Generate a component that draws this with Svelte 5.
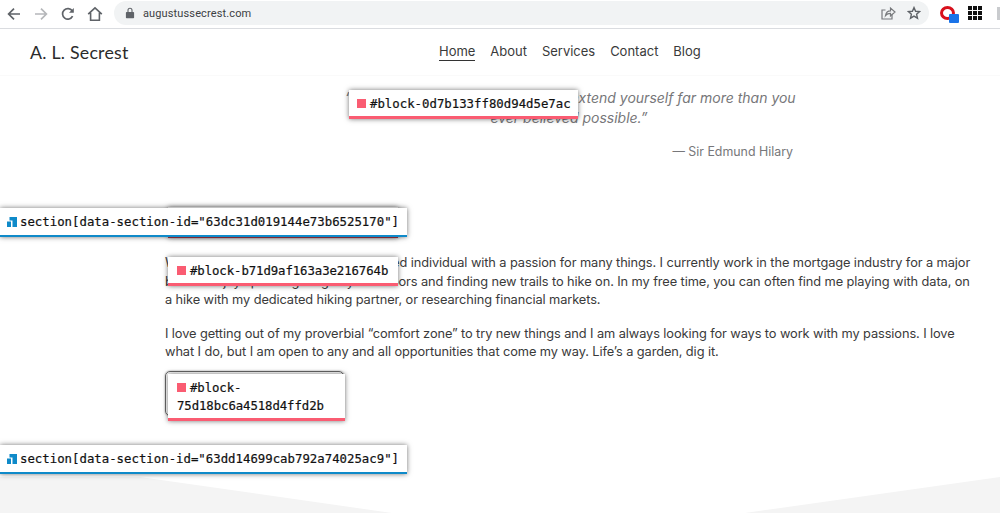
<script lang="ts">
	const navLinks = ['Home', 'About', 'Services', 'Contact', 'Blog'];
</script>

<div class="page">
	<div class="toolbar">
		<svg class="tool" width="16" height="16" viewBox="0 0 16 16"><path d="M14 8H3M8 2.600 2.600 8 8 13.400" fill="none" stroke="#5f6368" stroke-width="1.700" /></svg>
		<svg class="tool forward" width="16" height="16" viewBox="0 0 16 16"><path d="M2 8h11M8 2.600 13.400 8 8 13.400" fill="none" stroke="#b5b7ba" stroke-width="1.700" /></svg>
		<svg class="tool reload" width="16" height="16" viewBox="0 0 16 16"><path d="M12.600 10.200A5.300 5.300 0 1 1 12.200 4.800" fill="none" stroke="#5f6368" stroke-width="1.700" /><path d="M13.800 2v4.800H9z" fill="#5f6368" /></svg>
		<svg class="tool home" width="18" height="18" viewBox="0 0 18 18"><path d="M2.200 9.200 9 2.800l6.800 6.400M4.600 7.800v7.400h8.800V7.800" fill="none" stroke="#5f6368" stroke-width="1.600" /></svg>
		<div class="omnibox">
			<svg class="lock" width="10" height="12" viewBox="0 0 10 12"><path d="M1.600 5h6.800c.4 0 .7.3.7.7v4.800c0 .4-.3.7-.7.7H1.600c-.4 0-.7-.3-.7-.7V5.700c0-.4.3-.7.7-.7z" fill="#5f6368" /><path d="M3 5V3.200a2 2 0 0 1 4 0V5" fill="none" stroke="#5f6368" stroke-width="1.100" /></svg>
			<span class="url">augustussecrest.com</span>
			<svg class="share" width="16" height="16" viewBox="0 0 16 16"><path d="M12 9.500V14H2V5h3.500" fill="none" stroke="#77797c" stroke-width="1.200" /><path d="M5.500 10.500C6 7.500 8 5.800 10.500 5.800V3l4.500 4-4.500 4V8.300c-2 0-3.700.6-5 2.200z" fill="none" stroke="#77797c" stroke-width="1.200" /></svg>
			<svg class="star" width="14" height="14" viewBox="0 0 14 14"><path d="M7 1.600 8.600 5.300l4 .3-3 2.700.9 3.900L7 10.100l-3.500 2.100.9-3.900-3-2.700 4-.3z" fill="none" stroke="#5f6368" stroke-width="1.400" /></svg>
		</div>
		<div class="extensions">
			<div class="ext-red">
				<span class="ext-blue"></span>
			</div>
			<div class="ext-grid">
				{#each Array(9) as _}
					<span></span>
				{/each}
			</div>
			<div class="ext-edge"></div>
		</div>
	</div>

	<header class="site-header">
		<div class="logo">A. L. Secrest</div>
		<nav>
			{#each navLinks as link, i}
				<a href="#top" class:active={i === 0}>{link}</a>
			{/each}
		</nav>
	</header>

	<section class="quote-section">
		<div class="quote-wrap">
			<p class="quote">“Nothing is impossible, if you can extend yourself far more than you<br />ever believed possible.”</p>
			<p class="cite">— Sir Edmund Hilary</p>
			<div class="label block-label first"><span class="sq"></span>#block-0d7b133ff80d94d5e7ac</div>
		</div>
	</section>

	<section class="bio-section">
		<div class="label block-label hidden-block"></div>
		<div class="label section-label first-section">
			<svg width="10" height="10" viewBox="0 0 10 10"><path d="M0 4.500h4V10H0zM2.500 0H10v10H5.500V3.500h-3z" fill="#0f8ac9" /></svg>
			section[data-section-id="63dc31d019144e73b6525170"]
		</div>
		<div class="bio">
			<p>
				William is a curious and highly motivated individual with a passion for many things. I currently work in the mortgage industry for a major<br />
				bank. I enjoy spending long days outdoors and finding new trails to hike on. In my free time, you can often find me playing with data, on<br />
				a hike with my dedicated hiking partner, or researching financial markets.
			</p>
			<p>
				I love getting out of my proverbial “comfort zone” to try new things and I am always looking for ways to work with my passions. I love<br />
				what I do, but I am open to any and all opportunities that come my way. Life’s a garden, dig it.
			</p>
			<div class="label block-label second"><span class="sq"></span>#block-b71d9af163a3e216764b</div>
			<div class="button-wrap">
				<div class="ghost"></div>
				<div class="label block-label third"><span class="sq"></span>#block-<br />75d18bc6a4518d4ffd2b</div>
			</div>
		</div>
	</section>

	<section class="footer-section">
		<div class="label section-label last-section">
			<svg width="10" height="10" viewBox="0 0 10 10"><path d="M0 4.500h4V10H0zM2.500 0H10v10H5.500V3.500h-3z" fill="#0f8ac9" /></svg>
			section[data-section-id="63dd14699cab792a74025ac9"]
		</div>
		<div class="divider"></div>
	</section>
</div>

<style>
	:global(body) {
		margin: 0;
		background: #fff;
	}
	.page {
		width: 1000px;
		height: 513px;
		overflow: hidden;
		position: relative;
		font-family: Inter, 'Liberation Sans', sans-serif;
		color: #3a3a3a;
	}
	.toolbar {
		height: 28px;
		display: flex;
		align-items: center;
		border-bottom: 1px solid #dadce0;
		padding-left: 6px;
	}
	.tool {
		flex: none;
		margin-right: 9px;
	}
	.forward {
		margin-left: 2px;
		margin-right: 11px;
	}
	.reload {
		margin-right: 10px;
	}
	.home {
		margin-right: 10px;
	}
	.omnibox {
		width: 815px;
		height: 24px;
		margin-top: -2px;
		background: #f1f3f4;
		border-radius: 12px;
		display: flex;
		align-items: center;
		padding-left: 11px;
		box-sizing: border-box;
	}
	.lock {
		flex: none;
	}
	.url {
		margin-left: 8px;
		font: 11px Roboto, sans-serif;
		letter-spacing: 0.13px;
		color: #3c4043;
	}
	.share {
		margin-left: auto;
		margin-right: -1px;
	}
	.star {
		margin-left: 12px;
		margin-right: 8px;
	}
	.extensions {
		display: flex;
		align-items: center;
		margin-left: 11px;
	}
	.ext-red {
		width: 15px;
		height: 14px;
		border: 3.500px solid #d8111d;
		border-radius: 50%;
		position: relative;
		box-sizing: border-box;
		margin-top: -3px;
	}
	.ext-blue {
		position: absolute;
		left: 5.500px;
		top: 5.500px;
		width: 10px;
		height: 9px;
		background: #1a73e8;
		border-radius: 1px;
	}
	.ext-grid {
		margin-left: 13px;
		margin-top: -2px;
		display: grid;
		grid-template-columns: repeat(3, 4px);
		gap: 1px;
	}
	.ext-grid span {
		height: 4px;
		background: #111;
	}
	.ext-edge {
		width: 3px;
		height: 13px;
		margin: -2px 0 0 15px;
		background: #c9cbce;
	}

	.site-header {
		height: 46px;
		display: flex;
		align-items: center;
		position: relative;
		box-shadow: 0 1px 1px rgba(0, 0, 0, 0.02);
	}
	.logo {
		margin-left: 30px;
		font: 17.800px Lato, sans-serif;
		letter-spacing: 0.22px;
		color: #2b2b2b;
	}
	nav {
		position: absolute;
		left: 439px;
		top: 14px;
		display: flex;
		gap: 14.900px;
	}
	nav a {
		font-size: 13px;
		color: #3a3a3a;
		text-decoration: none;
		line-height: 16px;
		padding-bottom: 1px;
	}
	nav a.active {
		border-bottom: 1px solid #333;
	}

	.quote-section {
		height: 132px;
	}
	.quote-wrap {
		width: 448px;
		margin-left: 345px;
		padding-top: 12.500px;
		position: relative;
	}
	.quote {
		margin: 0;
		font-size: 14px;
		font-style: italic;
		line-height: 20.500px;
		text-align: center;
		color: #77777a;
		white-space: nowrap;
	}
	.cite {
		margin: 14.500px 0 0;
		font-size: 12.400px;
		line-height: 18px;
		text-align: right;
		color: #77777a;
	}

	.label {
		position: absolute;
		background: #fff;
		font: 400 12.350px/18px 'DejaVu Sans Mono', monospace;
		-webkit-text-stroke: 0.2px #111;
		color: #111;
		box-sizing: border-box;
		white-space: nowrap;
		box-shadow: 0 0 5px rgba(0, 0, 0, 0.55);
	}
	.block-label {
		border-bottom: 3px solid #fa5c72;
		padding: 5px 9px 4px;
	}
	.sq {
		display: inline-block;
		width: 9px;
		height: 9px;
		background: #fa5c72;
		margin-right: 4px;
	}
	.first {
		left: 4px;
		top: 15px;
		width: 229px;
		height: 29px;
		padding-left: 8px;
	}
	.hidden-block {
		left: 168px;
		top: 0;
		width: 230px;
		height: 31px;
		border-bottom-color: #a8343f;
	}
	.section-label {
		left: 0;
		border-bottom: 2px solid #0f8ac9;
		width: 407px;
		height: 29px;
		padding: 5px 0 0 7px;
		display: flex;
		align-items: flex-start;
		gap: 3px;
	}
	.section-label svg {
		margin-top: 4px;
		flex: none;
	}
	.first-section {
		top: 1px;
	}

	.bio-section {
		height: 232px;
		position: relative;
		padding-top: 1px;
	}
	.bio {
		width: 815px;
		margin-left: 165px;
		padding-top: 46px;
		position: relative;
		font-size: 12.800px;
		letter-spacing: -0.09px;
		line-height: 18.700px;
		color: #3a3a3a;
	}
	.bio p {
		margin: 0 0 14.500px;
		white-space: nowrap;
	}
	.second {
		left: 3px;
		top: 49px;
		width: 230px;
		height: 29px;
	}
	.button-wrap {
		position: absolute;
		left: 0;
		top: 163px;
	}
	.ghost {
		width: 179px;
		height: 45px;
		border: 1px solid #666;
		border-radius: 5px;
		box-sizing: border-box;
		box-shadow: 0 0 2px rgba(0, 0, 0, 0.4);
	}
	.third {
		left: 3px;
		top: 3px;
		width: 177px;
		height: 47px;
		padding: 5px 9px 0;
		white-space: normal;
	}
	.footer-section {
		position: relative;
		height: 73px;
	}
	.last-section {
		top: 5px;
		z-index: 1;
	}
	.divider {
		position: absolute;
		left: 0;
		right: 0;
		top: 37px;
		height: 36px;
		background: #f4f4f4;
		clip-path: polygon(0 0, 140px 0, 392px 100%, 745px 100%, 1000px 0, 1000px 100%, 0 100%);
	}
</style>
